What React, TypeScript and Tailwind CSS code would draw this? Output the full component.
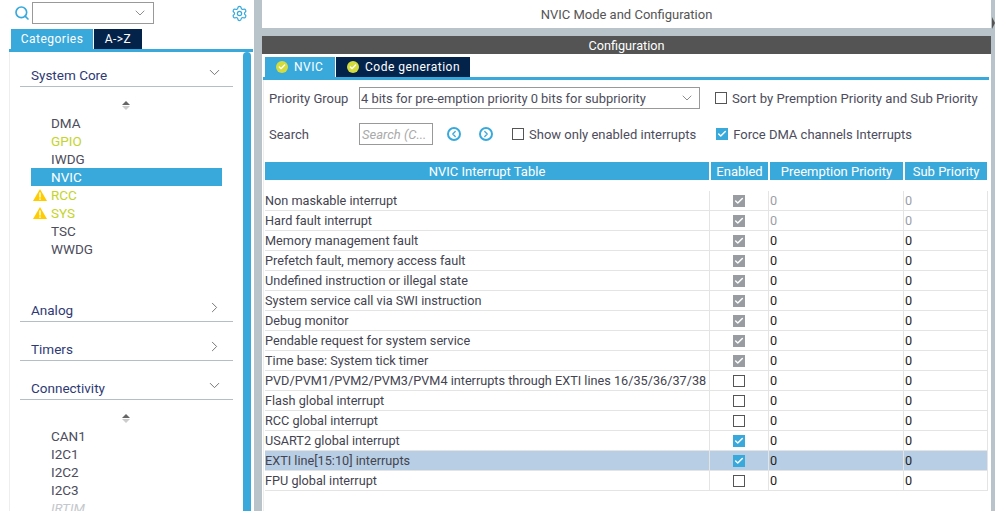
import { ChevronDown, ChevronRight, Search, Settings, ChevronLeft, Check } from "lucide-react";

const font = "font-['Roboto','Liberation_Sans',sans-serif]";

const rows = [
  { name: "Non maskable interrupt", state: "locked", faded: true },
  { name: "Hard fault interrupt", state: "locked", faded: true },
  { name: "Memory management fault", state: "locked" },
  { name: "Prefetch fault, memory access fault", state: "locked" },
  { name: "Undefined instruction or illegal state", state: "locked" },
  { name: "System service call via SWI instruction", state: "locked" },
  { name: "Debug monitor", state: "locked" },
  { name: "Pendable request for system service", state: "locked" },
  { name: "Time base: System tick timer", state: "locked" },
  { name: "PVD/PVM1/PVM2/PVM3/PVM4 interrupts through EXTI lines 16/35/36/37/38", state: "off" },
  { name: "Flash global interrupt", state: "off" },
  { name: "RCC global interrupt", state: "off" },
  { name: "USART2 global interrupt", state: "on" },
  { name: "EXTI line[15:10] interrupts", state: "on", selected: true },
  { name: "FPU global interrupt", state: "off" },
];

function Box({ state }: { state: string }) {
  if (state === "off") return <span className="block h-3 w-3 border border-[#555] bg-white" />;
  return (
    <span className={`flex h-3 w-3 items-center justify-center ${state === "on" ? "bg-[#39a9dc]" : "bg-[#999da1]"}`}>
      <Check className="h-2.5 w-2.5 text-white" strokeWidth={3.5} />
    </span>
  );
}

function Warn() {
  return (
    <svg viewBox="0 0 14 12" className="h-3 w-[14px]">
      <path d="M7 0 L14 12 L0 12 Z" fill="#ffcc00" />
      <rect x="6.3" y="3.5" width="1.4" height="5" fill="#fff" />
      <rect x="6.3" y="9.4" width="1.4" height="1.4" fill="#fff" />
    </svg>
  );
}

function Sorter() {
  return (
    <div className="flex h-[18px] flex-col items-center justify-center gap-px">
      <span className="h-0 w-0 border-x-4 border-b-4 border-x-transparent border-b-[#666]" />
      <span className="h-0 w-0 border-x-4 border-t-4 border-x-transparent border-t-[#ccc]" />
    </div>
  );
}

function Item({ label, color = "text-[#4d4d5c]", warn, selected }: { label: string; color?: string; warn?: boolean; selected?: boolean }) {
  return (
    <div className={`ml-[22px] flex h-[18px] w-[191px] items-center text-[13.5px] ${selected ? "bg-[#39a9dc] text-white" : color}`}>
      <span className="flex w-5 justify-start pl-[2px]">{warn && <Warn />}</span>
      {label}
    </div>
  );
}

function Section({ title, open }: { title: string; open?: boolean }) {
  return (
    <div className="mx-[11px] flex h-[26px] w-[213px] items-center justify-between border-b border-[#b3bec6] pl-[11px] pr-[10px] pt-[3px] text-[13.5px] text-[#2f3a75]">
      {title}
      {open ? (
        <ChevronDown className="-mt-[5px] h-[17px] w-[17px] text-[#666]" strokeWidth={1.25} />
      ) : (
        <ChevronRight className="-mt-[5px] h-[17px] w-[17px] text-[#666]" strokeWidth={1.25} />
      )}
    </div>
  );
}

function Sidebar() {
  return (
    <div className="flex h-[511px] w-[254px] shrink-0 flex-col overflow-hidden bg-white">
      <div className="flex h-[29px] shrink-0 items-start pt-[2px]">
        <Search className="ml-[14px] mt-[3px] h-[16px] w-[16px] text-[#39a9dc]" strokeWidth={2.5} />
        <div className="ml-[2px] flex h-[22px] w-[122px] items-center justify-end border border-[#999] pr-[5px]">
          <ChevronDown className="h-[16px] w-[16px] text-[#777]" strokeWidth={1.25} />
        </div>
        <Settings className="ml-[77px] mt-[3px] h-[17px] w-[17px] text-[#39a9dc]" strokeWidth={1.75} />
      </div>
      <div className="ml-[11px] flex h-5 shrink-0 gap-px text-[12px] tracking-[0.5px] text-white">
        <div className="flex w-[82px] items-center justify-center bg-[#39a9dc]">Categories</div>
        <div className="flex w-[48px] items-center justify-center bg-[#03234b]">A-&gt;Z</div>
      </div>
      <div className="ml-[9px] mr-[1px] flex min-h-0 flex-1 border-t-[3px] border-[#39a9dc]">
        <div className="flex flex-1 border-l-[1px] border-[#eee]">
          <div className="-ml-[1px] w-[233px] pt-[9px]">
            <Section title="System Core" open />
            <div className="mt-[9px]"><Sorter /></div>
            <div>
              <Item label="DMA" />
              <Item label="GPIO" color="text-[#c4d42a]" />
              <Item label="IWDG" />
              <Item label="NVIC" selected />
              <Item label="RCC" color="text-[#c4d42a]" warn />
              <Item label="SYS" color="text-[#c4d42a]" warn />
              <Item label="TSC" />
              <Item label="WWDG" />
            </div>
            <div className="mt-[38px] space-y-[13px]">
              <Section title="Analog" />
              <Section title="Timers" />
              <Section title="Connectivity" open />
            </div>
            <div className="mt-[9px]"><Sorter /></div>
            <div>
              <Item label="CAN1" />
              <Item label="I2C1" />
              <Item label="I2C2" />
              <Item label="I2C3" />
              <Item label="IRTIM" color="italic text-[#c4c8cc]" />
            </div>
          </div>
          <div className="ml-[1px] w-2 rounded-t-md bg-[#39a9dc]" />
        </div>
      </div>
    </div>
  );
}

function Main() {
  return (
    <div className="flex min-w-0 flex-1 flex-col">
      <div className="flex h-[28px] w-[729px] items-center justify-center pt-[2px] text-[13px] text-[#555]">NVIC Mode and Configuration</div>
      <div className="h-2 w-[729px] bg-[#b9c4ca]" />
      <div className="flex h-[18px] w-[729px] items-center justify-center bg-[#535453] pt-px text-[12.7px] text-white">Configuration</div>
      <div className="ml-[3px] mt-[3px] flex h-5 gap-px text-[12px] tracking-[0.5px] text-white">
        <div className="flex w-[70px] items-center gap-[6px] bg-[#39a9dc] pl-[11px]">
          <TabCheck /> NVIC
        </div>
        <div className="flex w-[134px] items-center gap-[6px] bg-[#03234b] pl-[11px]">
          <TabCheck /> Code generation
        </div>
      </div>
      <div className="ml-[1px] h-[3px] w-[726px] bg-[#39a9dc]" />
      <div className="ml-[1px] flex-1 border-l border-[#eee] pl-[1px] text-[#4d4d5c]">
        <div className="mt-[8px] flex h-[20px] items-center pl-[4px] text-[13px]">
          <span className="w-[90px] pt-px">Priority Group</span>
          <div className="flex h-[22px] w-[341px] items-center justify-between border border-[#999] pl-[1px] pr-[4px] pt-[2px] text-[12.9px]">
            4 bits for pre-emption priority 0 bits for subpriority
            <ChevronDown className="-mt-[2px] h-[16px] w-[16px] text-[#777]" strokeWidth={1.25} />
          </div>
          <span className="ml-[15px]"><Box state="off" /></span>
          <span className="ml-[5px] whitespace-nowrap pt-px text-[13.15px]">Sort by Premption Priority and Sub Priority</span>
        </div>
        <div className="mt-[16px] flex h-[20px] items-center pl-[4px] text-[13px]">
          <span className="w-[90px] pt-px">Search</span>
          <div className="flex h-[22px] w-[74px] items-center border border-[#999] pl-[2px] pt-[2px] italic text-[#aaa]">Search (C...</div>
          <Circle left />
          <Circle />
          <span className="ml-[19px]"><Box state="off" /></span>
          <span className="ml-[5px] pt-px">Show only enabled interrupts</span>
          <span className="ml-[20px]"><Box state="on" /></span>
          <span className="ml-[5px] pt-px">Force DMA channels Interrupts</span>
        </div>
        <div className="mt-[18px] flex h-[18px] gap-[2px] text-[13px] text-white">
          <div className="flex w-[444px] items-center justify-center bg-[#39a9dc] pt-[2px]">NVIC Interrupt Table</div>
          <div className="flex w-[57px] items-center justify-center bg-[#39a9dc] pt-[2px]">Enabled</div>
          <div className="flex w-[133px] items-center justify-center bg-[#39a9dc] pt-[2px]">Preemption Priority</div>
          <div className="flex w-[82px] items-center justify-center bg-[#39a9dc] pt-[2px]">Sub Priority</div>
        </div>
        <div className="mt-[11px] w-[723px]">
          {rows.map((r) => (
            <div key={r.name} className={`flex h-5 border-b-[1px] border-[#e4e4e4] text-[12.7px] leading-[19px] text-[#444450] ${r.selected ? "bg-[#b8cee4]" : ""}`}>
              <div className="w-[444px] overflow-hidden whitespace-nowrap">{r.name}</div>
              <div className="flex w-[59px] items-center justify-center border-l border-[#e4e4e4]"><Box state={r.state} /></div>
              <div className={`w-[135px] border-l border-[#e4e4e4] pl-[1px] ${r.faded ? "text-[#9a9ea8]" : "text-[#222]"}`}>0</div>
              <div className={`flex-1 border-x border-[#e4e4e4] pl-[1px] ${r.faded ? "text-[#9a9ea8]" : "text-[#222]"}`}>0</div>
            </div>
          ))}
        </div>
      </div>
    </div>
  );
}

function TabCheck() {
  return (
    <span className="flex h-3 w-3 items-center justify-center rounded-full bg-[#d4dc3c]">
      <Check className="h-2 w-2 text-white" strokeWidth={4} />
    </span>
  );
}

function Circle({ left }: { left?: boolean }) {
  const Icon = left ? ChevronLeft : ChevronRight;
  return (
    <span className={`flex h-[14px] w-[14px] items-center justify-center rounded-full border-2 border-[#39a9dc] ${left ? "ml-[14px]" : "ml-[18px]"}`}>
      <Icon className="h-2.5 w-2.5 text-[#39a9dc]" strokeWidth={3} />
    </span>
  );
}

export default function App() {
  return (
    <div className={`flex h-[511px] w-[995px] overflow-hidden bg-white ${font}`}>
      <Sidebar />
      <div className="w-2 shrink-0 bg-[#b9c4ca]" />
      <Main />
      <div className="flex w-1 shrink-0 flex-col items-end bg-[#b9c4ca] pt-[17px]">
        <span className="h-0 w-0 border-y-[6px] border-l-[3px] border-y-transparent border-l-[#555]" />
      </div>
    </div>
  );
}
